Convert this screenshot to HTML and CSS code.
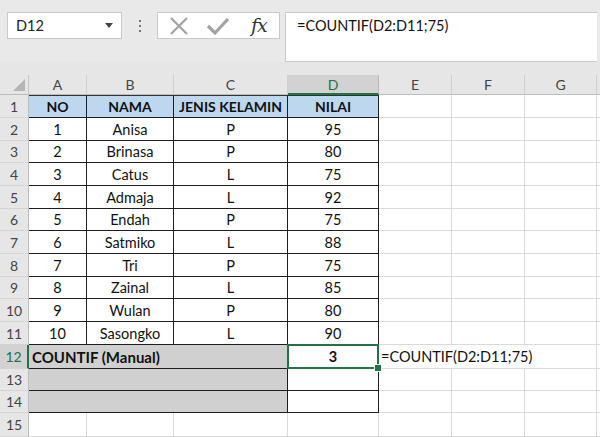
FILE: index.html
```html
<!DOCTYPE html>
<html>
<head>
<meta charset="utf-8">
<link rel="stylesheet" href="styles.css">
</head>
<body>
<div class="app">
  <div class="toolbar">
    <div class="namebox"><span class="nb-text">D12</span><span class="nb-arrow"></span></div>
    <div class="grip"><span></span><span></span><span></span></div>
    <div class="fbtns">
      <svg class="ico" width="24" height="20" viewBox="0 0 24 20"><path d="M4 2 L20 18 M20 2 L4 18" stroke="#a3a3a3" stroke-width="2.2" fill="none"/></svg>
      <svg class="ico" width="26" height="20" viewBox="0 0 26 20"><path d="M3 10 L10 17 L23 3" stroke="#a3a3a3" stroke-width="3.2" fill="none"/></svg>
      <span class="fx">fx</span>
    </div>
    <div class="formula">=COUNTIF(D2:D11;75)</div>
  </div>

  <div class="sheet">
    <div class="corner"><span class="tri"></span></div>
    <div class="ch">A</div><div class="ch">B</div><div class="ch">C</div><div class="ch selc">D</div><div class="ch">E</div><div class="ch">F</div><div class="ch">G</div><div class="ch last"></div>

    <div class="rh">1</div><div class="c t hd top">NO</div><div class="c t hd top">NAMA</div><div class="c t hd top">JENIS KELAMIN</div><div class="c t hd top">NILAI</div><div class="c"></div><div class="c"></div><div class="c"></div><div class="c last"></div>
    <div class="rh">2</div><div class="c t">1</div><div class="c t">Anisa</div><div class="c t">P</div><div class="c t">95</div><div class="c"></div><div class="c"></div><div class="c"></div><div class="c last"></div>
    <div class="rh">3</div><div class="c t">2</div><div class="c t">Brinasa</div><div class="c t">P</div><div class="c t">80</div><div class="c"></div><div class="c"></div><div class="c"></div><div class="c last"></div>
    <div class="rh">4</div><div class="c t">3</div><div class="c t">Catus</div><div class="c t">L</div><div class="c t">75</div><div class="c"></div><div class="c"></div><div class="c"></div><div class="c last"></div>
    <div class="rh">5</div><div class="c t">4</div><div class="c t">Admaja</div><div class="c t">L</div><div class="c t">92</div><div class="c"></div><div class="c"></div><div class="c"></div><div class="c last"></div>
    <div class="rh">6</div><div class="c t">5</div><div class="c t">Endah</div><div class="c t">P</div><div class="c t">75</div><div class="c"></div><div class="c"></div><div class="c"></div><div class="c last"></div>
    <div class="rh">7</div><div class="c t">6</div><div class="c t">Satmiko</div><div class="c t">L</div><div class="c t">88</div><div class="c"></div><div class="c"></div><div class="c"></div><div class="c last"></div>
    <div class="rh">8</div><div class="c t">7</div><div class="c t">Tri</div><div class="c t">P</div><div class="c t">75</div><div class="c"></div><div class="c"></div><div class="c"></div><div class="c last"></div>
    <div class="rh">9</div><div class="c t">8</div><div class="c t">Zainal</div><div class="c t">L</div><div class="c t">85</div><div class="c"></div><div class="c"></div><div class="c"></div><div class="c last"></div>
    <div class="rh">10</div><div class="c t">9</div><div class="c t">Wulan</div><div class="c t">P</div><div class="c t">80</div><div class="c"></div><div class="c"></div><div class="c"></div><div class="c last"></div>
    <div class="rh">11</div><div class="c t">10</div><div class="c t">Sasongko</div><div class="c t">L</div><div class="c t">90</div><div class="c"></div><div class="c"></div><div class="c"></div><div class="c last"></div>
    <div class="rh selr">12</div><div class="c t gr span3 left">COUNTIF (Manual)</div><div class="c t b active">3</div><div class="c span3 left ftext">=COUNTIF(D2:D11;75)</div><div class="c last"></div>
    <div class="rh">13</div><div class="c t gr span3"></div><div class="c t"></div><div class="c"></div><div class="c"></div><div class="c"></div><div class="c last"></div>
    <div class="rh">14</div><div class="c t gr span3"></div><div class="c t"></div><div class="c"></div><div class="c"></div><div class="c"></div><div class="c last"></div>
    <div class="rh">15</div><div class="c"></div><div class="c"></div><div class="c"></div><div class="c"></div><div class="c"></div><div class="c"></div><div class="c"></div><div class="c last"></div>
  </div>
</div>
</body>
</html>
```

FILE: styles.css
```css
* { box-sizing: border-box; }
html, body { margin: 0; padding: 0; }
body {
  width: 600px;
  height: 437px;
  overflow: hidden;
  background: #e6e6e6;
  font-family: Lato, "Liberation Sans", sans-serif;
  color: #111;
}
.app { width: 600px; height: 437px; }

.toolbar {
  height: 62px;
  display: flex;
  align-items: flex-start;
  padding: 12px 3px 0 7px;
  background: #e9e9e9;
}
.namebox {
  width: 115px;
  height: 27px;
  background: #fff;
  border: 1px solid #c9c9c9;
  display: flex;
  align-items: center;
  justify-content: space-between;
  padding: 0 8px 0 8px;
  font-size: 14.5px;
  color: #222;
}
.nb-arrow {
  width: 0; height: 0;
  border-left: 4px solid transparent;
  border-right: 4px solid transparent;
  border-top: 5px solid #444;
}
.grip {
  width: 35px;
  height: 27px;
  display: flex;
  flex-direction: column;
  align-items: center;
  justify-content: center;
  gap: 3px;
}
.grip span { width: 2px; height: 2px; background: #777; }
.fbtns {
  width: 123px;
  height: 27px;
  background: #fff;
  border: 1px solid #c9c9c9;
  display: flex;
  align-items: center;
  padding: 0 8px 0 9px;
  gap: 14px;
}
.fx {
  font-family: "DejaVu Serif", "Liberation Serif", serif;
  font-style: italic;
  font-size: 19px;
  color: #333;
  margin-left: 6px;
  letter-spacing: -1px;
  line-height: 1;
}
.formula {
  margin-left: 5px;
  width: 312px;
  height: 50px;
  background: #fff;
  border: 1px solid #c9c9c9;
  border-right: none;
  padding: 4px 0 0 11px;
  font-size: 14.5px;
  color: #111;
}

.sheet {
  margin-top: 13px;
  display: grid;
  grid-template-columns: 29px 58px 87px 114px 91px 73px 73px 72px 3px;
  grid-template-rows: 20px 23px 23px 22px 23px 23px 22px 23px 23px 22px 23px 23px 24px 22px 22px 24px;
  background: #fff;
  font-size: 14.5px;
}
.corner {
  background: #e6e6e6;
  border-right: 1px solid #c6c6c6;
  border-bottom: 1px solid #bdbdbd;
  position: relative;
}
.tri {
  position: absolute;
  right: 3px;
  bottom: 3px;
  width: 0; height: 0;
  border-left: 12px solid transparent;
  border-bottom: 12px solid #b5b5b5;
}
.ch {
  background: #e6e6e6;
  border-right: 1px solid #cfcfcf;
  border-bottom: 1px solid #bdbdbd;
  display: flex;
  align-items: center;
  justify-content: center;
  color: #444;
  font-size: 14px;
}
.ch.selc {
  background: #d2d2d2;
  color: #217346;
  border-bottom: 2px solid #217346;
  border-right-color: #b8b8b8;
}
.ch.last { border-right: none; }
.rh {
  background: #e6e6e6;
  border-right: 1px solid #bdbdbd;
  border-bottom: 1px solid #d4d4d4;
  display: flex;
  align-items: center;
  justify-content: center;
  color: #444;
  font-size: 14px;
}
.rh.selr {
  background: #d2d2d2;
  color: #217346;
  border-right: 2px solid #217346;
}
.c {
  border-right: 1px solid #dadada;
  border-bottom: 1px solid #dadada;
  display: flex;
  align-items: center;
  justify-content: center;
  white-space: nowrap;
  color: #111;
}
.c.last { border-right: none; }
.c.t {
  border-right-color: #1e1e1e;
  border-bottom-color: #1e1e1e;
}
.c.top { border-top: 1px solid #333; }
.c.hd {
  background: #bdd7ee;
  font-weight: 700;
  font-size: 14px;
}
.c.gr { background: #d0d0d0; }
.span3 { grid-column: span 3; }
.c.left { justify-content: flex-start; padding-left: 3px; }
.c.gr.left { font-weight: 700; font-size: 15px; }
.c.b { font-weight: 700; }
.c.ftext { padding-left: 2px; }
.c.active { position: relative; }
.c.active::after {
  content: "";
  position: absolute;
  left: -1px; top: -1px; right: -1px; bottom: -1px;
  border: 2px solid #217346;
}
.c.active::before {
  content: "";
  position: absolute;
  right: -4px;
  bottom: -4px;
  width: 6px;
  height: 6px;
  background: #217346;
  border: 1px solid #fff;
  z-index: 2;
}
```
